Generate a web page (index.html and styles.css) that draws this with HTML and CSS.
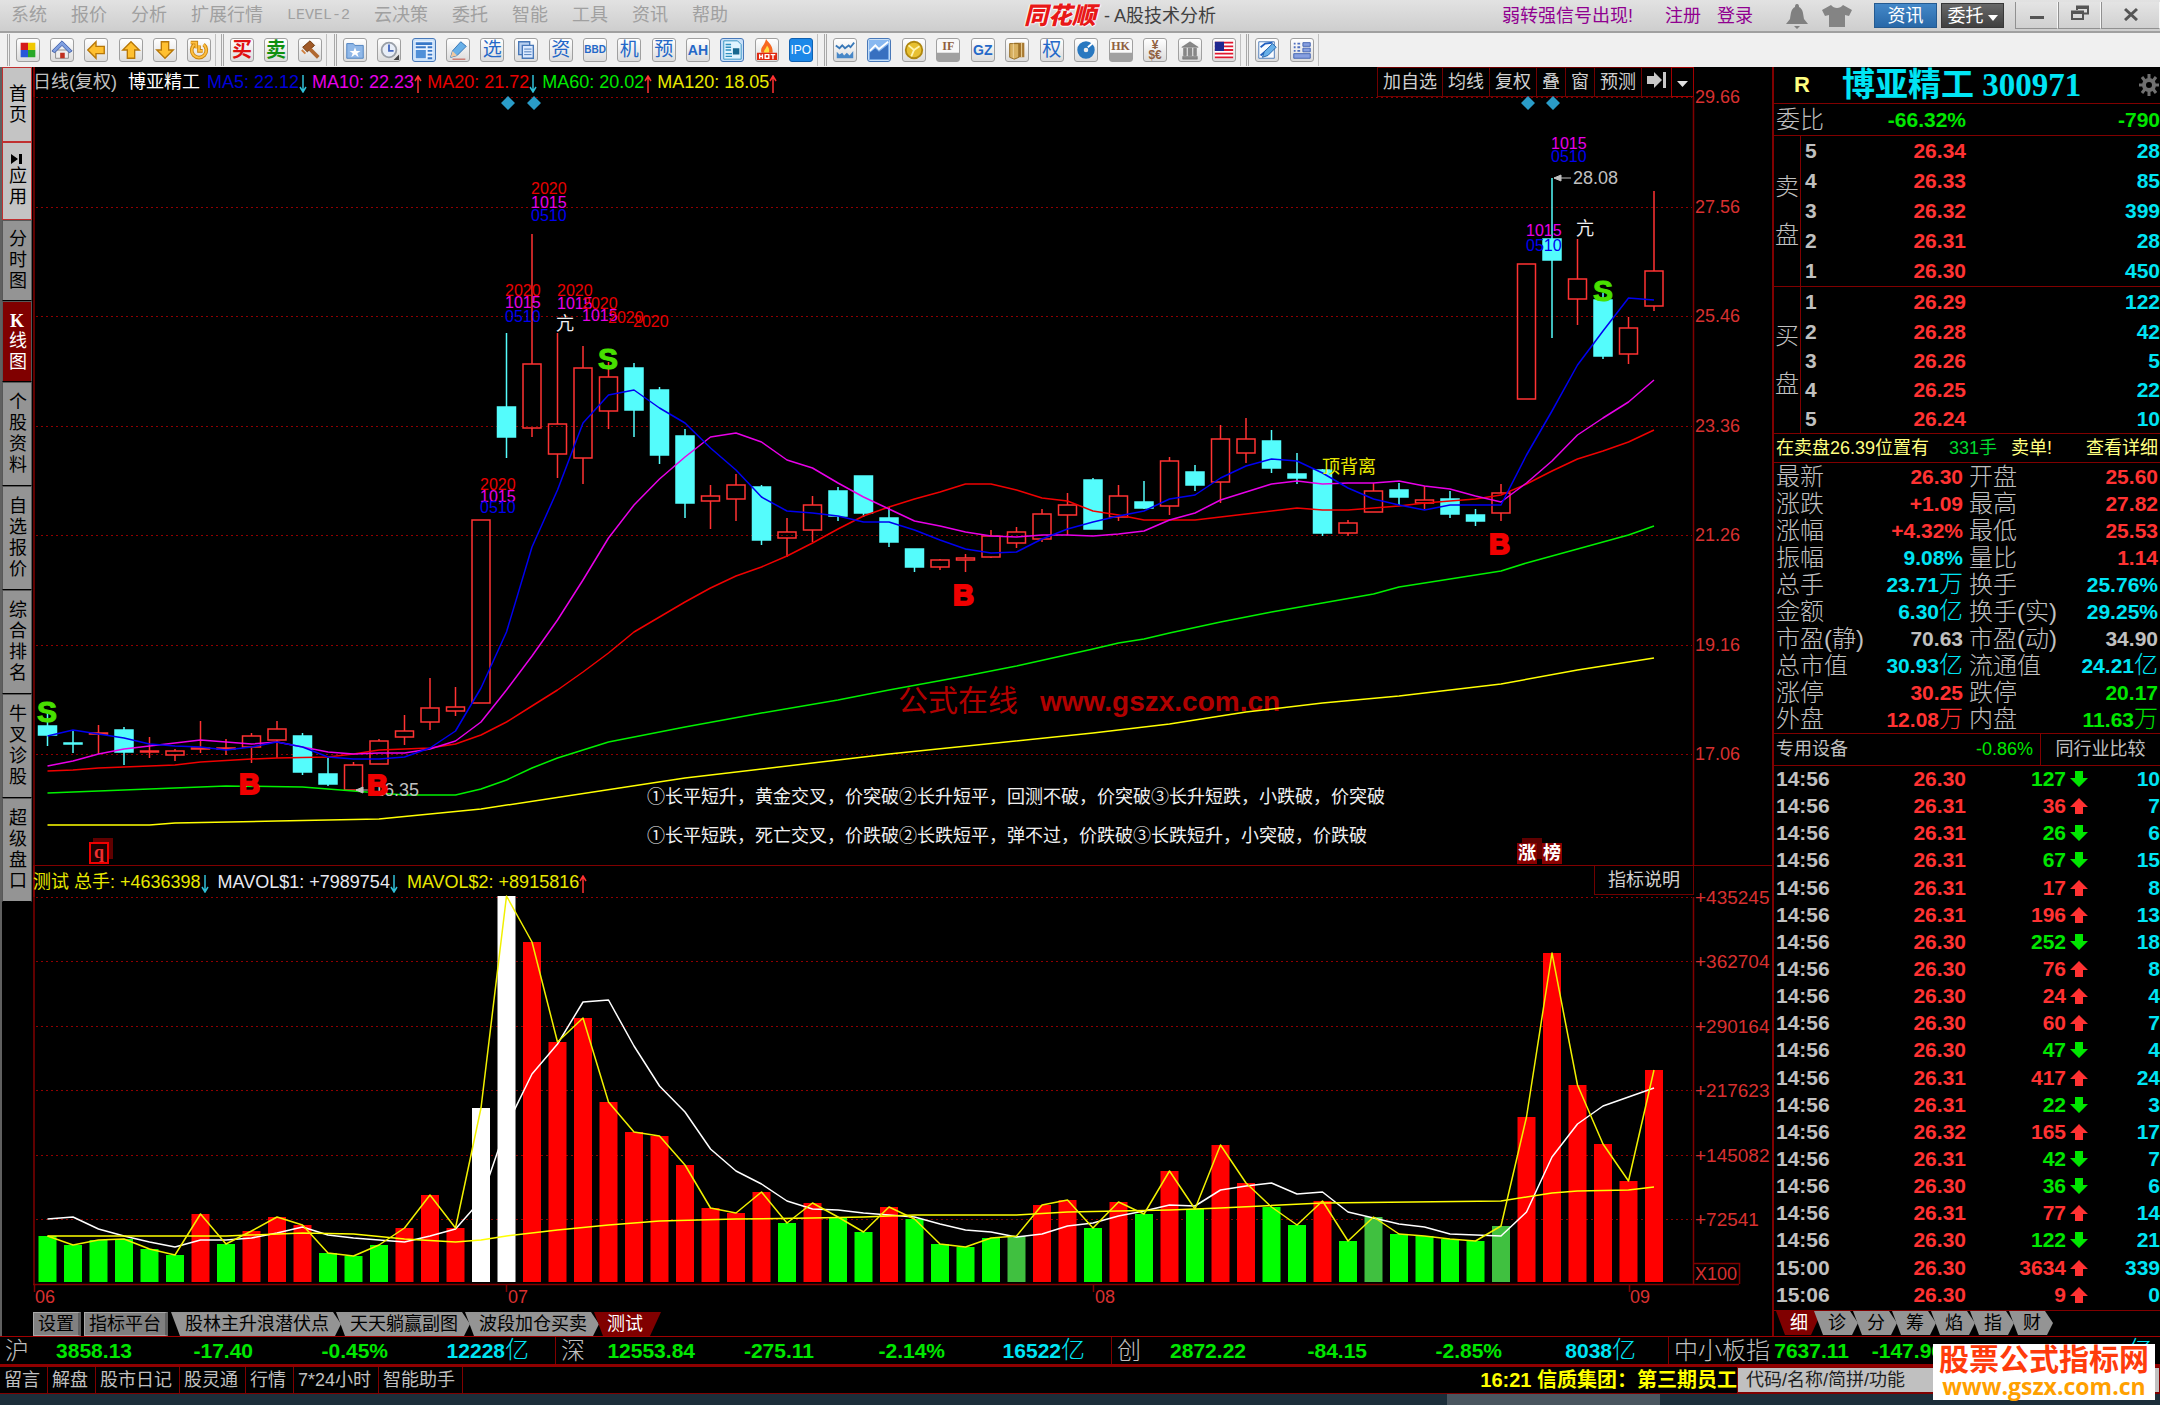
FILE: index.html
```html
<!DOCTYPE html>
<html lang="zh-CN">
<head>
<meta charset="utf-8">
<title>同花顺 - A股技术分析</title>
<link rel="stylesheet" href="styles.css">
</head>
<body>
<svg class="defs" aria-hidden="true">
  <symbol id="up" viewBox="0 0 18 16"><path d="M9 0 18 9H13V16H5V9H0Z" fill="#ff3232"/></symbol>
  <symbol id="down" viewBox="0 0 18 16"><path d="M9 16 18 7H13V0H5V7H0Z" fill="#00e600"/></symbol>
  <symbol id="thin-up" viewBox="0 0 8 18"><path d="M4 18V2M1 6 4 1 7 6" fill="none" stroke="#ff3232" stroke-width="1.5"/></symbol>
  <symbol id="thin-down" viewBox="0 0 8 18"><path d="M4 0V16M1 12 4 17 7 12" fill="none" stroke="#30c0d8" stroke-width="1.5"/></symbol>
</svg>

<header class="titlebar">
  <nav class="menu">
    <a href="#">系统</a><a href="#">报价</a><a href="#">分析</a><a href="#">扩展行情</a><a href="#" class="latin">LEVEL-2</a><a href="#">云决策</a><a href="#">委托</a><a href="#">智能</a><a href="#">工具</a><a href="#">资讯</a><a href="#">帮助</a>
  </nav>
  <div class="brand"><span class="logo">同花顺</span><span>- A股技术分析</span></div>
  <div class="account">
    <a href="#" class="alert">弱转强信号出现!</a><a href="#">注册</a><a href="#">登录</a>
    <svg class="bell" width="22" height="26" viewBox="0 0 22 26"><path d="M11 1C9 1 9 3 9 4 5 6 5 10 4 16L0 21H22L18 16C17 10 17 6 13 4 13 3 13 1 11 1ZM8 23H14L11 26Z" fill="#808080"/></svg>
    <svg class="shirt" width="30" height="24" viewBox="0 0 30 24"><path d="M9 1C12 5 18 5 21 1L30 6 27 12 23 11V23H7V11L3 12 0 6Z" fill="#848484"/></svg>
    <button class="pill blue">资讯</button><button class="pill dark">委托<svg width="10" height="8" viewBox="0 0 10 8"><path d="M0 1H10L5 7Z" fill="#fff"/></svg></button>
    <div class="window">
      <button aria-label="最小化"><svg width="16" height="16" viewBox="0 0 16 16"><path d="M1 11H15V14H1Z" fill="#555"/></svg></button>
      <button aria-label="还原"><svg width="18" height="16" viewBox="0 0 18 16"><path d="M6 5V1.500H17V8.500H12M1 6.500H12V14H1ZM1 8H12M6 3H17" fill="none" stroke="#555" stroke-width="2"/></svg></button>
      <button aria-label="关闭"><svg width="14" height="14" viewBox="0 0 14 14"><path d="M1 2 13 13M13 2 1 13" stroke="#555" stroke-width="3"/></svg></button>
    </div>
  </div>
</header>

<div class="toolbar">
  <div class="group g6">
    <button aria-label="板块"><svg viewBox="0 0 24 24"><path d="M4 4h8v8H4z" fill="#d41a1a"/><path d="M12 4h8v8h-8z" fill="#f0c800"/><path d="M4 12h8v8H4z" fill="#2858d8"/><path d="M12 12h8v8h-8z" fill="#28a828"/></svg></button>
    <button aria-label="首页"><svg viewBox="0 0 24 24"><path d="M5 12h14v9H5z" fill="#eee" stroke="#888"/><path d="M1 13 12 2 23 13 20 15 12 7 4 15Z" fill="#7f9fe0" stroke="#3c5ca8"/><path d="M10 15h5v6h-5z" fill="#c03020"/></svg></button>
    <button aria-label="后退"><svg viewBox="0 0 24 24"><path d="M3 12 12 3V8H21V16H12V21Z" fill="#ffc030" stroke="#b87808" stroke-width="1.500"/></svg></button>
    <button aria-label="上翻"><svg viewBox="0 0 24 24"><path d="M12 3 21 12H16V21H8V12H3Z" fill="#ffc030" stroke="#b87808" stroke-width="1.500"/></svg></button>
    <button aria-label="下翻"><svg viewBox="0 0 24 24"><path d="M12 21 3 12H8V3H16V12H21Z" fill="#ffc030" stroke="#b87808" stroke-width="1.500"/></svg></button>
    <button aria-label="刷新"><svg viewBox="0 0 24 24"><path d="M7 6A8 8 0 1 0 17 6M3 4H9V10M12 7V13H16" fill="none" stroke="#c88410" stroke-width="4"/><path d="M7 6A8 8 0 1 0 17 6M3 4H9V10M12 7V13H16" fill="none" stroke="#ffc040" stroke-width="2"/></svg></button>
  </div>
  <div class="group g3">
    <button class="buy">买</button><button class="sell">卖</button>
    <button aria-label="拍卖"><svg viewBox="0 0 24 24"><path d="M4 9 12 2 17 7 9 14Z" fill="#a05a28" stroke="#6c3408"/><path d="M12 11 21 20" stroke="#b06830" stroke-width="4"/><path d="M3 12l4 4" stroke="#d08040" stroke-width="2"/></svg></button>
  </div>
  <div class="group g14">
    <button aria-label="自选股"><svg viewBox="0 0 24 24"><path d="M3 5H10L12 7H21V21H3Z" fill="#90b8e8" stroke="#4a80c0"/><path d="M12 9l1.500 4H18l-3.500 2.500L16 20l-4-3-4 3 1.500-4.500L6 13h4.500z" fill="#fff"/></svg></button>
    <button aria-label="历史"><svg viewBox="0 0 24 24"><circle cx="12" cy="12" r="8" fill="#e8eef8" stroke="#9aa0a8" stroke-width="2"/><path d="M12 6V13H17" fill="none" stroke="#4468c0" stroke-width="2"/><path d="M23 17V23H17Z" fill="#444"/></svg></button>
    <button class="lit" aria-label="新闻"><svg viewBox="0 0 24 24"><path d="M2 2H22V22H2Z" fill="#e8f2ff"/><path d="M3 5H21" stroke="#3878c8" stroke-width="3"/><path d="M3 9H14M16 9H21M16 13H21M16 17H21M16 21H21" stroke="#3878c8" stroke-width="2"/><path d="M3 12H14V21H3Z" fill="#5090d8"/></svg></button>
    <button aria-label="画线"><svg viewBox="0 0 24 24"><path d="M4 20 6 13 15 3 21 8 11 18Z" fill="#68b0e8" stroke="#3070b0"/><path d="M4 20 6 13 11 18Z" fill="#f0c8a0"/><path d="M6 22H20" stroke="#c04030"/></svg></button>
    <button class="glyph">选</button>
    <button aria-label="复制"><svg viewBox="0 0 24 24"><path d="M4 3H16V17H4Z" fill="#b8d0f0" stroke="#4878b8" stroke-width="1.500"/><path d="M8 7H20V21H8Z" fill="#dceaff" stroke="#4878b8" stroke-width="1.500"/><path d="M10 11H18M10 14H18M10 17H18" stroke="#4878b8"/></svg></button>
    <button class="glyph">资</button>
    <button class="glyph tight">BBD</button>
    <button class="glyph">机</button><button class="glyph">预</button><button class="glyph word">AH</button>
    <button class="lit" aria-label="资料"><svg viewBox="0 0 24 24"><path d="M3 2H18L22 6V22H3Z" fill="#e0f4ff" stroke="#3090c0"/><path d="M5 6H11M5 9H11M5 12H11M5 16H12M5 19H12" stroke="#3090c0" stroke-width="1.500"/><path d="M13 10H20V17H13Z" fill="#186890"/></svg></button>
    <button aria-label="热点"><svg viewBox="0 0 24 24"><path d="M11 0C14 5 19 7 18 15H6C4 9 9 8 11 0Z" fill="#f86820"/><path d="M12 7C14 10 15 11 14 15H9C8 12 11 11 12 7Z" fill="#ffe040"/><path d="M1 15H23V23H1Z" fill="#e02810"/><path d="M4 16.500V21.500M7 16.500V21.500M4 19H7M10 17H14V21H10ZM16 17H21M18.500 17V22" stroke="#fff" fill="none" stroke-width="1.500"/></svg></button>
    <button class="ipo">IPO</button>
  </div>
  <div class="group g12">
    <button aria-label="分时走势"><svg viewBox="0 0 24 24"><path d="M2 7 6 10 9 7 12 10 16 7 18 9 22 4" fill="none" stroke="#3878b8" stroke-width="2"/><path d="M3 21V14L6 17 9 15 11 18 14 15 17 18 21 13V21Z" fill="#4888c8"/></svg></button>
    <button class="lit" aria-label="K线"><svg viewBox="0 0 24 24"><path d="M1 1H23V23H1Z" fill="#88b8f0"/><path d="M2 22V15L8 10 12 14 22 6V22Z" fill="#3870c0"/><path d="M2 13 8 7 12 11 22 3" fill="none" stroke="#fff" stroke-width="2"/></svg></button>
    <button aria-label="黄金"><svg viewBox="0 0 24 24"><circle cx="12" cy="12" r="9" fill="#e8c030" stroke="#b08810" stroke-width="2"/><path d="M12 12 6 7M12 12 18 8M12 12 9 19" stroke="#fff4b0" stroke-width="2"/></svg></button>
    <button class="mount">IF</button>
    <button class="glyph word bold">GZ</button>
    <button aria-label="商品"><svg viewBox="0 0 24 24"><path d="M9 4H20V20H9Z" fill="#a87830"/><path d="M4 5H14V20L9 22 4 20Z" fill="#d8b060" stroke="#906820"/><path d="M8 5V21M17 4V20" stroke="#f0d8a0"/></svg></button>
    <button class="glyph">权</button>
    <button aria-label="基金"><svg viewBox="0 0 24 24"><circle cx="12" cy="12" r="6" fill="none" stroke="#2878c0" stroke-width="7"/><path d="M14 9 21 3" stroke="#fff" stroke-width="2"/></svg></button>
    <button class="mount">HK</button>
    <button class="money"><span>¥</span><span>$€</span></button>
    <button aria-label="银行"><svg viewBox="0 0 24 24"><path d="M3 9 12 3 21 9ZM4 19H20V22H4ZM5 10H8V18H5ZM10 10H14V18H10ZM16 10H19V18H16Z" fill="#888" stroke="#606060" stroke-width=".5"/></svg></button>
    <button aria-label="美股"><svg viewBox="0 0 24 24"><path d="M2 3H22V21H2Z" fill="#fff"/><path d="M2 4H22M2 8H22M2 12H22M2 16H22M2 20H22" stroke="#e01830" stroke-width="2"/><path d="M2 3H12V13H2Z" fill="#202890"/></svg></button>
  </div>
  <div class="group g2">
    <button aria-label="编辑"><svg viewBox="0 0 24 24"><path d="M3 3H20V21H3Z" fill="#f8fbff" stroke="#4878b8"/><path d="M5 9 10 5 18 4M5 18 12 12" stroke="#2060c0" fill="none" stroke-width="2"/><path d="M7 20 9 14 18 5 22 9 13 18Z" fill="#68b0e8" stroke="#2060a8"/></svg></button>
    <button aria-label="布局"><svg viewBox="0 0 24 24"><path d="M3 5H5M3 9H5M3 13H5M7 5H10M7 9H10M7 13H10" stroke="#5070c0" stroke-width="2"/><path d="M13 4H21V8H13ZM13 10H21V14H13ZM3 16H21V21H3Z" fill="#88a0e0" stroke="#4060b0"/></svg></button>
  </div>
</div>

<main class="workspace">
  <nav class="side">
    <button class="light t2">首页</button>
    <button class="light t3"><svg width="12" height="10" viewBox="0 0 12 10"><path d="M0 0 7 5 0 10ZM8 0H11V10H8Z" fill="#000"/></svg>应用</button>
    <button class="t3">分时图</button>
    <button class="active t3"><b>K</b>线图</button>
    <button>个股资料</button>
    <button>自选报价</button>
    <button>综合排名</button>
    <button>牛叉诊股</button>
    <button>超级盘口</button>
  </nav>

  <section class="chart">
    <div class="chart-head">
      <p class="legend"><span class="gray">日线(复权)</span><span class="white name">博亚精工</span><span class="c-ma5">MA5: 22.12<svg><use href="#thin-down"/></svg></span><span class="c-ma10">MA10: 22.23<svg><use href="#thin-up"/></svg></span><span class="c-ma20">MA20: 21.72<svg><use href="#thin-down"/></svg></span><span class="c-ma60">MA60: 20.02<svg><use href="#thin-up"/></svg></span><span class="c-ma120">MA120: 18.05<svg><use href="#thin-up"/></svg></span></p>
      <div class="chart-tools">
        <button>加自选</button><button>均线</button><button>复权</button><button>叠</button><button>窗</button><button>预测</button><button aria-label="移到末尾"><svg width="19" height="16" viewBox="0 0 19 16"><path d="M0 4H7V0L15 8 7 16V12H0ZM16 0H19V16H16Z" fill="#c8c8c8"/></svg></button><button aria-label="更多" class="more"><svg width="11" height="8" viewBox="0 0 11 8"><path d="M0 1H11L5.500 7Z" fill="#e0e0e0"/></svg></button>
      </div>
    </div>

    <svg class="plot" viewBox="33 97 1739 768" role="img" aria-label="日K线图">
      <g class="grid"><path d="M36 97.500H1692M36 207.500H1692M36 316.500H1692M36 426.500H1692M36 535.500H1692M36 645.500H1692M36 754.500H1692"/></g>
      <path class="frame" d="M34 97V865M1693.500 97V865"/>
      <g class="axis">
        <text x="1695" y="103">29.66</text><text x="1695" y="213">27.56</text><text x="1695" y="322">25.46</text><text x="1695" y="432">23.36</text><text x="1695" y="541">21.26</text><text x="1695" y="651">19.16</text><text x="1695" y="760">17.06</text>
      </g>
      <g class="brandmark"><text class="cn" x="898" y="711">公式在线</text><text class="url" x="1040" y="711">www.gszx.com.cn</text></g>
      <g id="candles"></g>
      <g class="tag">
        <path d="M373 790H356M356 790l7 -3v6z M1571 178H1554M1554 178l7 -3v6z"/>
        <text x="374" y="796">16.35</text><text x="1573" y="184">28.08</text>
      </g>
      <g class="diamond"><path d="M508 96l7 7-7 7-7-7zM534 96l7 7-7 7-7-7zM1528 96l7 7-7 7-7-7zM1553 96l7 7-7 7-7-7z"/></g>
      <g class="mark">
        <text class="m20" x="480" y="490">2020</text><text class="m10" x="480" y="502">1015</text><text class="m05" x="480" y="513">0510</text>
        <text class="m20" x="505" y="296">2020</text><text class="m10" x="505" y="308">1015</text><text class="m05" x="505" y="322">0510</text>
        <text class="m20" x="531" y="194">2020</text><text class="m10" x="531" y="208">1015</text><text class="m05" x="531" y="221">0510</text>
        <text class="m20" x="557" y="296">2020</text><text class="m10" x="557" y="309">1015</text>
        <text class="m20" x="582" y="309">2020</text><text class="m10" x="582" y="321">1015</text>
        <text class="m20" x="608" y="323">2020</text><text class="m20" x="633" y="327">2020</text>
        <text class="m10" x="1526" y="236">1015</text><text class="m05" x="1526" y="251">0510</text>
        <text class="m10" x="1551" y="149">1015</text><text class="m05" x="1551" y="162">0510</text>
      </g>
      <g class="note">
        <text x="556" y="330">亢</text><text x="1576" y="235">亢</text>
        <text x="647" y="803">①长平短升，黄金交叉，价突破②长升短平，回测不破，价突破③长升短跌，小跌破，价突破</text>
        <text x="647" y="842">①长平短跌，死亡交叉，价跌破②长跌短平，弹不过，价跌破③长跌短升，小突破，价跌破</text>
        <text class="top" x="1322" y="473">顶背离</text>
      </g>
      <g class="signal">
        <text class="s" x="37" y="722">S</text><text class="s" x="598" y="369">S</text><text class="s" x="1593" y="301">S</text>
        <text class="b" x="239" y="794">B</text><text class="b" x="367" y="795">B</text><text class="b" x="953" y="605">B</text><text class="b" x="1489" y="554">B</text>
      </g>
      <g class="badge">
        <path class="back" d="M93 838h20v21h-20zM1522 838h20v21h-20z"/>
        <path class="box" d="M90 843h18v20h-18z"/><text class="q" x="94" y="858">q</text>
        <path class="fill" d="M1517 843h20v21h-20zM1542 843h20v21h-20z"/>
        <text x="1518" y="859">涨</text><text x="1543" y="859">榜</text>
      </g>
    </svg>

    <div class="chart-head volume">
      <p class="legend"><span class="c-ma120">测试 总手: +4636398<svg><use href="#thin-down"/></svg></span><span class="pale">MAVOL$1: +7989754<svg><use href="#thin-down"/></svg></span><span class="c-ma120">MAVOL$2: +8915816<svg><use href="#thin-up"/></svg></span></p>
      <div class="chart-tools"><button class="explain">指标说明</button></div>
    </div>

    <svg class="plot" viewBox="33 897 1739 415" role="img" aria-label="成交量">
      <g class="grid"><path d="M36 897.500H1692M36 961.500H1692M36 1026.500H1692M36 1090.500H1692M36 1155.500H1692M36 1219.500H1692"/></g>
      <path class="frame" d="M34 897V1284M1693.500 897V1284M33 1284.500H1739M34.500 1284V1292M506.500 1284V1292M1093.500 1284V1292M1629.500 1284V1292M1694 1263.500H1739.500V1284"/>
      <g id="volumes"></g>
      <g class="axis vol">
        <text x="1695" y="904">+435245</text><text x="1695" y="968">+362704</text><text x="1695" y="1033">+290164</text><text x="1695" y="1097">+217623</text><text x="1695" y="1162">+145082</text><text x="1695" y="1226">+72541</text>
      </g>
      <g class="axis">
        <text x="1695" y="1280">X100</text><text x="35" y="1303">06</text><text x="508" y="1303">07</text><text x="1095" y="1303">08</text><text x="1630" y="1303">09</text>
      </g>
    </svg>

    <nav class="tabs">
      <button class="flat">设置</button><button class="flat">指标平台</button>
      <div class="slants"><button class="slant">股林主升浪潜伏点</button><button class="slant">天天躺赢副图</button><button class="slant">波段加仓买卖</button><button class="slant active">测试</button></div>
    </nav>
  </section>

  <aside class="quote">
    <h1 class="stock"><span class="flag">R</span><span class="id">博亚精工 300971</span><svg width="22" height="24" viewBox="0 0 22 24"><g stroke="#707070" fill="none"><circle cx="11" cy="12" r="5" stroke-width="4"/><path d="M11 1V6M11 18V23M1 12H5M17 12H21M4 4 7 8M18 4 15 8M4 20 7 16M18 20 15 16" stroke-width="3"/></g></svg></h1>
    <div class="ratio"><span class="lbl">委比</span><span class="green">-66.32%</span><span class="green">-790</span></div>
    <div class="book">
      <div class="side-name"><span>卖</span><span>盘</span></div>
      <table>
        <tr><th>5</th><td>26.34</td><td>28</td></tr><tr><th>4</th><td>26.33</td><td>85</td></tr><tr><th>3</th><td>26.32</td><td>399</td></tr><tr><th>2</th><td>26.31</td><td>28</td></tr><tr><th>1</th><td>26.30</td><td>450</td></tr>
      </table>
    </div>
    <div class="book">
      <div class="side-name"><span>买</span><span>盘</span></div>
      <table>
        <tr><th>1</th><td>26.29</td><td>122</td></tr><tr><th>2</th><td>26.28</td><td>42</td></tr><tr><th>3</th><td>26.26</td><td>5</td></tr><tr><th>4</th><td>26.25</td><td>22</td></tr><tr><th>5</th><td>26.24</td><td>10</td></tr>
      </table>
    </div>
    <p class="notice"><span>在卖盘26.39位置有</span><span class="lots">331手</span><span>卖单!</span><a href="#">查看详细</a></p>
    <table class="stats">
      <tr><th>最新</th><td class="red">26.30</td><th>开盘</th><td class="red">25.60</td></tr>
      <tr><th>涨跌</th><td class="red">+1.09</td><th>最高</th><td class="red">27.82</td></tr>
      <tr><th>涨幅</th><td class="red">+4.32%</td><th>最低</th><td class="red">25.53</td></tr>
      <tr><th>振幅</th><td class="cyan">9.08%</td><th>量比</th><td class="red">1.14</td></tr>
      <tr><th>总手</th><td class="cyan">23.71<i>万</i></td><th>换手</th><td class="cyan">25.76%</td></tr>
      <tr><th>金额</th><td class="cyan">6.30<i>亿</i></td><th>换手(实)</th><td class="cyan">29.25%</td></tr>
      <tr><th>市盈(静)</th><td>70.63</td><th>市盈(动)</th><td>34.90</td></tr>
      <tr><th>总市值</th><td class="cyan">30.93<i>亿</i></td><th>流通值</th><td class="cyan">24.21<i>亿</i></td></tr>
      <tr><th>涨停</th><td class="red">30.25</td><th>跌停</th><td class="green">20.17</td></tr>
      <tr><th>外盘</th><td class="red">12.08<i>万</i></td><th>内盘</th><td class="green">11.63<i>万</i></td></tr>
    </table>
    <div class="sector"><span>专用设备</span><span class="green">-0.86%</span><button>同行业比较</button></div>
    <table class="ticks">
      <tr><th>14:56</th><td>26.30</td><td class="green">127</td><td><svg><use href="#down"/></svg></td><td>10</td></tr>
      <tr><th>14:56</th><td>26.31</td><td class="red">36</td><td><svg><use href="#up"/></svg></td><td>7</td></tr>
      <tr><th>14:56</th><td>26.31</td><td class="green">26</td><td><svg><use href="#down"/></svg></td><td>6</td></tr>
      <tr><th>14:56</th><td>26.31</td><td class="green">67</td><td><svg><use href="#down"/></svg></td><td>15</td></tr>
      <tr><th>14:56</th><td>26.31</td><td class="red">17</td><td><svg><use href="#up"/></svg></td><td>8</td></tr>
      <tr><th>14:56</th><td>26.31</td><td class="red">196</td><td><svg><use href="#up"/></svg></td><td>13</td></tr>
      <tr><th>14:56</th><td>26.30</td><td class="green">252</td><td><svg><use href="#down"/></svg></td><td>18</td></tr>
      <tr><th>14:56</th><td>26.30</td><td class="red">76</td><td><svg><use href="#up"/></svg></td><td>8</td></tr>
      <tr><th>14:56</th><td>26.30</td><td class="red">24</td><td><svg><use href="#up"/></svg></td><td>4</td></tr>
      <tr><th>14:56</th><td>26.30</td><td class="red">60</td><td><svg><use href="#up"/></svg></td><td>7</td></tr>
      <tr><th>14:56</th><td>26.30</td><td class="green">47</td><td><svg><use href="#down"/></svg></td><td>4</td></tr>
      <tr><th>14:56</th><td>26.31</td><td class="red">417</td><td><svg><use href="#up"/></svg></td><td>24</td></tr>
      <tr><th>14:56</th><td>26.31</td><td class="green">22</td><td><svg><use href="#down"/></svg></td><td>3</td></tr>
      <tr><th>14:56</th><td>26.32</td><td class="red">165</td><td><svg><use href="#up"/></svg></td><td>17</td></tr>
      <tr><th>14:56</th><td>26.31</td><td class="green">42</td><td><svg><use href="#down"/></svg></td><td>7</td></tr>
      <tr><th>14:56</th><td>26.30</td><td class="green">36</td><td><svg><use href="#down"/></svg></td><td>6</td></tr>
      <tr><th>14:56</th><td>26.31</td><td class="red">77</td><td><svg><use href="#up"/></svg></td><td>14</td></tr>
      <tr><th>14:56</th><td>26.30</td><td class="green">122</td><td><svg><use href="#down"/></svg></td><td>21</td></tr>
      <tr><th>15:00</th><td>26.30</td><td class="red">3634</td><td><svg><use href="#up"/></svg></td><td>339</td></tr>
      <tr><th>15:06</th><td>26.30</td><td class="red">9</td><td><svg><use href="#up"/></svg></td><td>0</td></tr>
    </table>
    <nav class="slants mini"><button class="slant active">细</button><button class="slant">诊</button><button class="slant">分</button><button class="slant">筹</button><button class="slant">焰</button><button class="slant">指</button><button class="slant">财</button></nav>
  </aside>
</main>

<section class="indices">
  <div class="index"><span class="lbl">沪</span><b>3858.13</b><b>-17.40</b><b>-0.45%</b><b class="cyan">12228<i>亿</i></b></div>
  <div class="index"><span class="lbl">深</span><b>12553.84</b><b>-275.11</b><b>-2.14%</b><b class="cyan">16522<i>亿</i></b></div>
  <div class="index"><span class="lbl">创</span><b>2872.22</b><b>-84.15</b><b>-2.85%</b><b class="cyan">8038<i>亿</i></b></div>
  <div class="index last"><span class="lbl">中小板指</span><b>7637.11</b><b>-147.96</b><b>-1.90%</b><b class="cyan">1884<i>亿</i></b></div>
</section>

<footer class="status">
  <nav><a href="#">留言</a><a href="#">解盘</a><a href="#">股市日记</a><a href="#">股灵通</a><a href="#">行情</a><a href="#">7*24小时</a><a href="#">智能助手</a></nav>
  <p class="ticker">16:21 信质集团：第三期员工</p>
  <input type="text" aria-label="搜索" placeholder="代码/名称/简拼/功能">
</footer>
<div class="desk"><span></span></div>

<div class="watermark"><strong>股票公式指标网</strong><span>www.gszx.com.cn</span></div>
<script src="script.js"></script>
</body>
</html>
```
FILE: styles.css
```css
* { box-sizing: border-box; }
body {
  margin: 0;
  min-height: 100vh;
  display: flex;
  flex-direction: column;
  position: relative;
  overflow-x: hidden;
  background: #000;
  color: #c0c0c0;
  font: 18px/20px "Liberation Sans", "Noto Sans CJK SC", sans-serif;
}
button { font: inherit; color: inherit; background: none; border: 0; padding: 0; margin: 0; white-space: nowrap; }
a { color: inherit; text-decoration: none; white-space: nowrap; }
p, h1 { margin: 0; }
i { font-style: normal; font-weight: 300; font-size: 24px; }
table { border-collapse: collapse; border-spacing: 0; }
th, td { padding: 0; font-weight: bold; }
.defs { position: absolute; width: 0; height: 0; }
.red { color: #ff3232; }
.green { color: #00e600; }
.cyan { color: #00e4f4; }
.gray { color: #c0c0c0; }
.white { color: #fff; }
.pale { color: #e8e8f0; }

/* title bar */
.titlebar {
  height: 33px;
  flex: none;
  display: grid;
  grid-template-columns: 1fr auto 1fr;
  align-items: center;
  background: linear-gradient(#e2e2e2, #cecece);
  border-bottom: 2px solid #a0a0a0;
}
.menu { display: flex; gap: 24px; padding-left: 11px; color: #a0a0a0; }
.latin { font: 15px/20px "Liberation Mono", monospace; padding-top: 1px; }
.brand { display: flex; align-items: center; gap: 8px; color: #404040; justify-content: center; padding-left: 80px; }
.logo {
  color: #e81818;
  font-size: 24px;
  font-weight: 900;
  font-style: italic;
  text-shadow: 0 1px 1px #fff, 1px 0 1px #fff, -1px 0 1px #fff;
}
.account { display: flex; align-items: center; justify-content: flex-end; color: #900090; height: 100%; }
.account a { margin-right: 16px; }
.account .alert { margin-right: 32px; }
.bell { margin: 0 14px 0 17px; }
.shirt { margin-right: 22px; }
.pill { width: 63px; height: 25px; border: 1px solid #245a90; color: #fff; line-height: 22px; margin-right: 4px; }
.pill svg { margin-left: 4px; }
.blue { background: linear-gradient(#4488c8, #2868a8); }
.dark { background: linear-gradient(#686868, #404040); border-color: #383838; }
.window { display: flex; margin-left: 7px; height: 27px; }
.window button { width: 43px; border: 1px solid #909090; border-top: 0; border-right-color: #f8f8f8; background: linear-gradient(#e4e4e4, #d0d0d0); }
.window button:last-child { width: 59px; }

/* icon toolbar */
.toolbar { height: 34px; flex: none; display: flex; align-items: center; background: #f0f0f0; }
.group { height: 32px; display: flex; justify-content: space-between; align-items: center; padding-left: 6px; padding-right: 4px; border-left: 3px double #a8a8a8; border-right: 1px solid #c0c0c0; margin-left: 7px; flex: none; }
.g6 { width: 209px; }
.g3 { width: 106px; margin-left: 5px; }
.g14 { width: 484px; }
.g12 { width: 417px; margin-left: 6px; }
.g2 { width: 73px; margin-left: 5px; }
.group button {
  width: 24px;
  height: 24px;
  border: 1px solid #a0a0a0;
  border-radius: 3px;
  background: linear-gradient(#fff, #dcdcdc);
  display: flex;
  align-items: center;
  justify-content: center;
  overflow: hidden;
  flex: none;
}
.group svg { width: 22px; height: 22px; }
.group .lit { border-color: #4878b8; background: #c8e0f8; }
.group .buy { color: #e01010; font-weight: bold; font-size: 20px; }
.group .sell { color: #109010; font-weight: bold; font-size: 20px; }
.group .glyph { color: #2468c8; font-size: 19px; }
.group .word { font-size: 14px; font-weight: bold; }
.group .tight { font-size: 10px; font-weight: bold; }
.group .ipo { background: #1c88e8; border-color: #1060b0; color: #fff; font-size: 12px; }
.group .mount { color: #906040; font: bold 12px/10px "Liberation Serif", serif; align-items: flex-start; padding-top: 2px; background: linear-gradient(#f8f8f8 60%, #a0a0a0 65%); }
.group .money { color: #906040; font: bold 12px/10px "Liberation Sans", sans-serif; flex-direction: column; }

/* workspace */
.workspace { display: flex; align-items: stretch; flex: none; }
.side { width: 33px; flex: none; border-left: 2px solid #606060; display: flex; flex-direction: column; }
.side button {
  width: 30px;
  height: 104px;
  padding: 8px 6px;
  background: #949494;
  border: 1px solid #585858;
  border-bottom: 1px solid #000;
  color: #000;
  line-height: 21px;
  white-space: normal;
  word-break: break-all;
  overflow: hidden;
  flex: none;
}
.side .t2, .side .t3 { height: 81px; }
.side .light { background: #c4c4c4; border-color: #c03030; height: 78px; }
.side .light.t2 { height: 75px; }
.side .active { background: #800000; color: #fff; }
.side b { display: block; font: bold 18px/20px "Liberation Serif", serif; }
.side svg { display: block; margin: 0 auto 2px; }

.chart { flex: 1; min-width: 0; display: flex; flex-direction: column; }
.chart-head { display: flex; justify-content: space-between; height: 30px; border-left: 2px solid #800000; padding-right: 78px; }
.legend { display: flex; align-items: center; gap: 5px; white-space: nowrap; margin-left: -2px; }
.legend span { display: flex; align-items: center; }
.legend .name { margin: 0 2px 0 6px; }
.legend svg { width: 8px; height: 18px; margin-top: 4px; }
.c-ma5 { color: #0000d8; }
.c-ma10 { color: #e800e8; }
.c-ma20 { color: #e80000; }
.c-ma60 { color: #00e800; }
.c-ma120 { color: #e8e800; }
.chart-tools { display: flex; align-items: stretch; }
.chart-tools button { padding: 0 5px; border: 1px solid #700000; border-right-width: 0; color: #d0d0d0; }
.chart-tools .more { border: 1px solid #a00000; }
.volume { height: 32px; border-top: 1px solid #800000; align-items: flex-start; padding-right: 78px; }
.volume .legend { height: 32px; gap: 9px; }
.chart-tools .explain { height: 29px; padding: 0 13px; border: 1px solid #700000; border-top: 0; }

.plot { display: block; width: 100%; height: auto; overflow: visible; }
.grid path { stroke: #900000; stroke-dasharray: 2 3; fill: none; }
.frame { stroke: #800000; stroke-width: 1.500; fill: none; }
.axis text { fill: #d83030; font-size: 18px; }
.axis.vol text { font-size: 19px; }
.brandmark text { fill: #b00000; }
.brandmark .cn { font-size: 30px; }
.brandmark .url { font-size: 28px; font-weight: bold; }
.tag text { fill: #c0c0c0; font-size: 18px; }
.tag path { stroke: #c0c0c0; fill: #c0c0c0; }
.diamond path { fill: #2a9cc8; }
.mark text { font-size: 16px; }
.mark .m20 { fill: #e80000; }
.mark .m10 { fill: #e800e8; }
.mark .m05 { fill: #0000f0; }
.note text { fill: #f0f0f0; font-size: 18px; }
.note .top { fill: #e8e800; }
.signal text { font-size: 30px; font-weight: bold; stroke-width: 1; }
.signal .s { fill: #48e000; stroke: #48e000; }
.signal .b { fill: #f00000; stroke: #f00000; font-size: 29px; stroke-width: 2; }
.badge .back { fill: #600000; }
.badge .box { fill: #200000; stroke: #f00000; stroke-width: 2; }
.badge .fill { fill: #880000; }
.badge text { fill: #fff; font-size: 18px; font-weight: bold; }
.badge .q { fill: #f03030; font-family: "Liberation Serif", serif; }
.up-candle { fill: none; stroke: #ff3232; stroke-width: 1.500; }
.down-candle { fill: #54fcfc; stroke: #54fcfc; stroke-width: 1.500; }
.series { fill: none; stroke-width: 1.500; stroke-linejoin: round; }

/* chart tabs */
.tabs { display: flex; height: 24px; }
.flat { height: 24px; padding: 0 4px; background: #808080; border: 1px solid #a8a8a8; border-right: 3px solid #606060; color: #000; margin-right: 3px; }
.slants { display: flex; }
.slant { height: 24px; padding: 0 12px 0 14px; background: #949494; color: #000; clip-path: polygon(0 0, calc(100% - 8px) 0, 100% 50%, calc(100% - 6px) 100%, 9px 100%); margin-right: -5px; }
.slant.active { background: #800000; color: #fff; clip-path: polygon(0 0, 100% 0, calc(100% - 11px) 100%, 9px 100%); padding: 0 18px 0 13px; }

/* quote panel */
.quote { width: 388px; flex: none; border-left: 2px solid #800000; display: flex; flex-direction: column; }
.stock { height: 36px; display: flex; align-items: center; padding-left: 20px; font-size: 22px; font-weight: bold; line-height: 34px; }
.stock svg { margin-left: auto; }
.flag { color: #ffff80; }
.id { margin-left: 32px; color: #00e4f4; font: bold 33px/34px "Liberation Serif", "Noto Sans CJK SC", serif; white-space: nowrap; }
.ratio { height: 33px; border: solid #800000; border-width: 1px 0; display: grid; grid-template-columns: 60px 132px 1fr; align-items: center; font-size: 21px; font-weight: bold; text-align: right; }
.lbl { font-size: 24px; font-weight: 300; text-align: left; padding-left: 2px; }
.book { display: flex; border-bottom: 1px solid #800000; }
.side-name { width: 27px; flex: none; border-right: 1px solid #800000; display: flex; flex-direction: column; justify-content: center; gap: 24px; padding-left: 1px; font-size: 24px; font-weight: 300; line-height: 24px; }
.book table { flex: 1; table-layout: fixed; font-size: 21px; }
.book tr { height: 30px; }
.book + .book tr { height: 29px; }
.book + .book tr:first-child { height: 30px; }
.book th { text-align: left; padding-left: 4px; width: 40px; }
.book td { text-align: right; color: #ff3232; width: 125px; }
.book td:last-child { color: #00e4f4; width: auto; }
.notice { height: 29px; border-bottom: 1px solid #800000; display: flex; align-items: center; color: #ffff80; padding: 0 2px; white-space: nowrap; }
.notice .lots { color: #00d830; margin: 0 14px 0 20px; }
.notice a { margin-left: auto; }
.stats { width: 100%; font-size: 21px; border-bottom: 1px solid #800000; table-layout: fixed; }
.stats tr { height: 27px; line-height: 24px; }
.stats th { text-align: left; font-size: 24px; font-weight: 300; padding-left: 2px; white-space: nowrap; width: 94px; }
.stats th + td + th { width: 100px; padding-left: 4px; }
.stats td { text-align: right; padding-right: 2px; white-space: nowrap; }
.stats td:nth-child(2) { width: 97px; }
.sector { height: 32px; border-bottom: 1px solid #800000; display: grid; grid-template-columns: 1fr auto 120px; align-items: center; padding-left: 2px; }
.sector .green { padding-right: 7px; font-weight: normal; }
.sector button { height: 31px; border-left: 1px solid #800000; }
.ticks { width: 100%; height: 543px; font-size: 21px; table-layout: fixed; }
.ticks th { text-align: left; width: 80px; padding-left: 2px; }
.ticks td { text-align: right; color: #ff3232; width: 112px; }
.ticks td:nth-child(3) { width: 100px; }
.ticks td.green { color: #00e600; }
.ticks td:nth-child(4) { width: 26px; }
.ticks td:last-child { width: auto; color: #00e4f4; }
.ticks svg { display: block; width: 18px; height: 16px; margin-left: 4px; }
.mini { border-top: 1px solid #800000; padding-left: 2px; height: 26px; margin-top: auto; }
.mini .slant { width: 44px; height: 24px; padding: 0 4px 0 6px; }
.mini .slant.active { width: 46px; padding: 0; }
.mini .slant.active + .slant { margin-left: -3px; }

/* index bar */
.indices { display: grid; grid-template-columns: 556fr 556fr 557fr 491fr; height: 31px; flex: none; border-top: 1px solid #a00000; border-bottom: 3px solid #900000; color: #00e600; font-size: 21px; white-space: nowrap; overflow: hidden; }
.index { display: grid; align-items: center; padding-right: 26px; border-right: 1px solid #800000; min-width: 0; }
.index .lbl { color: #c0c0c0; padding-left: 5px; }
.index b { text-align: right; }
.index i { line-height: 20px; }
.index:nth-child(1) { grid-template-columns: 45px 87px 121px 135px 1fr; }
.index:nth-child(2) { grid-template-columns: 45px 94px 119px 131px 1fr; }
.index:nth-child(3) { grid-template-columns: 45px 89px 121px 135px 1fr; padding-right: 32px; }
.index.last { grid-template-columns: 101px 79px 94px 102px 1fr; padding-right: 8px; border-right: 0; }

/* status bar */
.status { display: flex; height: 27px; flex: none; border-bottom: 1px solid #800000; }
.status nav { display: flex; }
.status nav a { padding: 3px 7px 0 4px; border-right: 1px solid #800000; }
.ticker { margin-left: auto; color: #ffff00; font-weight: bold; font-size: 20px; line-height: 26px; white-space: nowrap; }
.status input { width: 423px; height: 26px; margin: 0; padding: 0 8px; border: 1px solid #800000; background: #c0c0c0; color: #000; font: inherit; }
.status input::placeholder { color: #202020; opacity: 1; }
.desk { flex: 1; min-height: 11px; background: #1c2e3a; padding-left: 67%; }
.desk span { display: block; width: 213px; height: 11px; background: #4a5660; }

.watermark { position: absolute; right: 5px; bottom: 5px; width: 222px; height: 56px; background: #fff; display: flex; flex-direction: column; align-items: center; white-space: nowrap; }
.watermark strong { color: #ff3c0c; font-size: 30px; line-height: 30px; font-weight: 700; padding-top: 1px; }
.watermark span { color: #ffa000; font: 700 23px/22px "Open Sans", sans-serif; }
```
FILE: script.js
```js
// One column per trading day.
const X0 = 47.5, STEP = 25.5;
const x = i => X0 + i * STEP;
const NS = 'http://www.w3.org/2000/svg';

function add(parent, tag, attrs) {
  const node = document.createElementNS(NS, tag);
  for (const key in attrs) node.setAttribute(key, attrs[key]);
  parent.appendChild(node);
}

// [direction, body top, body bottom, high, low]
const candles = [
  'd',726,735,713,746,'d',743,744,730,753,'u',733,734,725,754,'d',730,752,727,765,'u',751,752,737,758,'u',751,755,749,761,
  'u',748,749,721,753,'u',748,749,739,755,'u',736,747,733,763,'u',729,740,721,758,'d',736,772,733,775,'d',774,784,758,786,
  'u',765,790,762,790,'u',741,764,739,764,'u',731,737,715,745,'u',708,722,678,730,'u',707,711,687,716,'u',520,703,520,703,
  'd',407,437,333,458,'u',364,428,234,437,'u',424,454,333,478,'u',368,458,346,484,'u',377,411,362,429,'d',368,410,363,437,
  'd',390,455,387,464,'d',436,503,429,518,'u',496,501,485,529,'u',485,499,474,521,'d',487,540,485,545,'u',532,538,518,557,
  'u',505,530,496,542,'d',491,516,487,521,'d',476,513,476,517,'d',518,542,507,547,'d',549,567,549,572,'u',560,567,559,570,
  'u',558,560,554,572,'u',536,557,530,558,'u',532,543,527,548,'u',514,539,509,542,'u',505,515,493,535,'d',480,529,478,529,
  'u',496,517,485,521,'d',502,508,481,509,'u',461,506,457,515,'d',472,485,465,491,'u',439,482,425,503,'u',439,453,418,463,
  'd',441,468,430,473,'d',474,478,453,484,'d',470,533,469,536,'u',523,533,520,536,'u',491,512,483,512,'d',490,497,483,505,
  'u',500,503,486,509,'d',499,514,491,518,'d',515,521,509,526,'u',493,513,484,521,'u',264,399,264,399,'d',239,260,178,338,
  'u',279,299,239,325,'d',300,356,293,359,'u',328,354,317,364,'u',271,306,191,311
];

// Moving averages as day, y pairs.
const averages = [
  ['#ffff00', [0,825,4,825,5,823,9,821,13,819,17,809,25,778,33,754,41,733,44,724,47,712,50,703,53,696,57,684,60,670,61,666,63,658]],
  ['#00f000', [0,793,3,790,7,786,10,787,12,791,14,795,16,795,17,789,18,780,19,768,20,758,22,742,25,727,28,713,31,700,33,690,36,676,38,666,41,649,42,643,43,639,44,633,46,622,48,612,50,603,52,594,53,587,55,579,57,571,58,563,60,549,62,535,63,526]],
  ['#f00000', [0,771,1,770,2,768,4,766,5,765,6,762,8,759,9,758,11,757,12,754,13,750,14,749,15,748,16,744,17,735,18,722,19,706,20,690,21,672,22,653,23,632,24,617,25,602,26,588,27,576,28,567,29,556,30,543,31,529,32,516,33,507,34,499,35,492,36,484,37,484,38,490,39,498,40,501,41,511,42,515,43,520,45,520,46,517,47,514,48,511,49,508,50,510,51,510,52,508,53,506,54,503,55,501,56,499,57,495,58,484,59,471,60,459,61,451,62,442,63,430]],
  ['#e800e8', [0,766,1,761,2,754,3,749,4,746,5,743,6,740,7,742,8,744,9,742,10,747,11,752,12,754,13,753,14,753,15,749,16,741,17,722,18,690,19,656,20,620,21,580,22,538,23,505,24,479,25,457,26,437,27,433,28,442,29,460,30,468,31,483,32,497,33,509,34,521,35,526,36,532,37,536,38,537,39,535,40,535,41,536,42,534,43,531,44,520,45,513,46,500,47,492,48,484,49,481,50,484,51,483,52,483,53,481,54,486,55,489,56,496,57,502,58,483,59,461,60,435,61,418,62,402,63,380]],
  ['#0000f0', [0,736,1,730,2,734,3,738,4,744,5,746,6,747,7,750,8,747,9,742,10,747,11,757,12,759,13,759,14,757,15,748,16,731,17,688,18,632,19,547,20,490,21,423,22,395,23,390,24,408,25,423,26,448,27,470,28,497,29,511,30,513,31,516,32,522,33,522,34,530,35,540,36,549,37,553,38,552,39,539,40,529,41,522,42,516,43,511,44,499,45,495,46,478,47,466,48,459,49,461,50,473,51,488,52,499,53,505,54,510,55,505,56,505,57,505,58,455,59,411,60,365,61,331,62,298,63,300]]
];

// Volume bars: colour code and top edge.
const FILL = { g: '#00ff00', r: '#ff0000', w: '#ffffff', p: '#40c040' };
const volumes = ('g1236 g1245 g1240 g1239 g1249 g1255 r1214 g1244 r1231 r1217 r1225 g1253 g1256 g1245 r1228 r1195 r1228 w1108 w896 r942 r1042 r1018 ' +
  'r1102 r1132 r1136 r1165 r1208 r1213 r1192 g1223 r1203 g1217 g1232 r1207 g1219 g1244 g1247 g1238 p1236 r1205 r1200 g1228 r1202 g1214 ' +
  'r1171 g1209 r1145 r1183 g1207 g1225 r1201 g1241 p1217 g1234 g1236 g1239 g1241 p1226 r1117 r953 r1085 r1144 r1181 r1070').split(' ');
const volumeShort = [1219,1217,1229,1236,1242,1247,1240,1240,1238,1233,1227,1235,1238,1240,1242,1236,1229,1200,1126,1074,1044,1002,1000,1046,1086,1112,1149,1171,1184,1201,1209,1210,1213,1215,1217,1224,1230,1232,1237,1234,1226,1223,1216,1211,1205,1206,1190,1186,1183,1194,1192,1212,1218,1224,1227,1234,1235,1236,1212,1157,1124,1106,1097,1088];
const volumeLong = [0,1236,7,1236,10,1233,12,1234,14,1239,16,1242,17,1240,18,1236,20,1230,22,1225,24,1221,27,1219,30,1218,32,1217,34,1215,38,1215,40,1212,44,1210,46,1208,50,1203,57,1201,58,1197,59,1193,60,1191,62,1190,63,1187];

function line(parent, colour, pairs) {
  const points = [];
  for (let k = 0; k < pairs.length; k += 2) points.push(x(pairs[k]) + ',' + pairs[k + 1]);
  add(parent, 'polyline', { class: 'series', stroke: colour, points: points.join(' ') });
}

const price = document.getElementById('candles');
for (let k = 0; k < candles.length; k += 5) {
  const [dir, top, bottom, high, low] = candles.slice(k, k + 5);
  const c = x(k / 5);
  add(price, 'path', {
    class: dir === 'u' ? 'up-candle' : 'down-candle',
    d: `M${c - 9} ${top}H${c + 9}V${bottom}H${c - 9}ZM${c} ${high}V${top}M${c} ${bottom}V${low}`
  });
}
averages.forEach(([colour, pairs]) => line(price, colour, pairs));

const vol = document.getElementById('volumes');
const tops = [];
volumes.forEach((item, i) => {
  const top = +item.slice(1);
  add(vol, 'rect', { x: x(i) - 9, y: top, width: 18, height: 1282 - top, fill: FILL[item[0]] });
  tops.push(i, top);
});
line(vol, '#ffffff', volumeShort.flatMap((y, i) => [i, y]));
line(vol, '#ffff00', volumeLong);
line(vol, '#f0f000', tops);
```
